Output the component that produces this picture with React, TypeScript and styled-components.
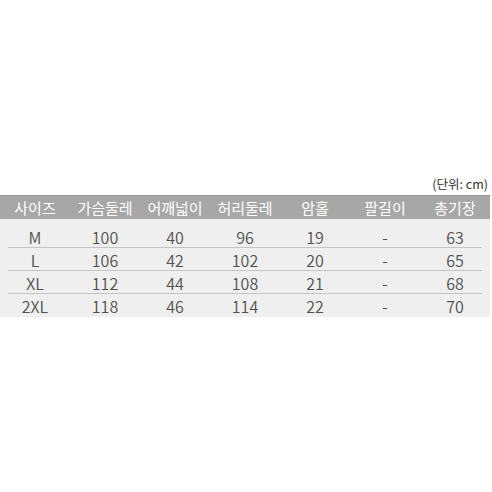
import styled, { createGlobalStyle } from 'styled-components';

const GlobalStyle = createGlobalStyle`
	html, body {
		margin: 0;
		padding: 0;
		background: #ffffff;
	}
	body {
		font-family: 'Noto Sans CJK KR', 'Noto Sans', sans-serif;
	}
`;

const Page = styled.div`
	width: 492px;
	height: 492px;
	padding-top: 175px;
	box-sizing: border-box;
`;

const Chart = styled.div`
	width: 490px;
`;

const Unit = styled.div`
	text-align: right;
	font-size: 12.5px;
	line-height: 18px;
	color: #333;
	padding-right: 2px;
	margin-bottom: 2px;
`;

const Row = styled.div<{ $head?: boolean; $line?: boolean }>`
	display: grid;
	grid-template-columns: repeat(7, 1fr);
	height: 23px;
	align-items: center;
	text-align: center;
	font-size: ${(p) => (p.$head ? '15px' : '16px')};
	font-weight: ${(p) => (p.$head ? 400 : 350)};
	color: ${(p) => (p.$head ? '#ffffff' : '#505050')};
	background: ${(p) =>
		p.$line
			? 'linear-gradient(#c4c4c4, #c4c4c4) no-repeat center bottom / calc(100% - 16px) 1px'
			: 'none'};
	box-sizing: border-box;
`;

const Head = styled.div`
	background: #a7a7a7;
	border-top: 1px solid #989898;
`;

const Body = styled.div`
	background: #efefef;
	padding: 6px 0 0;
`;

const Cell = styled.span`
	white-space: nowrap;
	line-height: 1;
`;

const header = ['사이즈', '가슴둘레', '어깨넓이', '허리둘레', '암홀', '팔길이', '총기장'];

const rows = [
	['M', '100', '40', '96', '19', '-', '63'],
	['L', '106', '42', '102', '20', '-', '65'],
	['XL', '112', '44', '108', '21', '-', '68'],
	['2XL', '118', '46', '114', '22', '-', '70'],
];

export default function App() {
	return (
		<>
			<GlobalStyle />
			<Page>
				<Chart>
					<Unit>(단위: cm)</Unit>
					<Head>
						<Row $head>
							{header.map((h) => (
								<Cell key={h}>{h}</Cell>
							))}
						</Row>
					</Head>
					<Body>
						{rows.map((r, i) => (
							<Row key={r[0]} $line={i < rows.length - 1}>
								{r.map((c, j) => (
									<Cell key={j}>{c}</Cell>
								))}
							</Row>
						))}
					</Body>
				</Chart>
			</Page>
		</>
	);
}
